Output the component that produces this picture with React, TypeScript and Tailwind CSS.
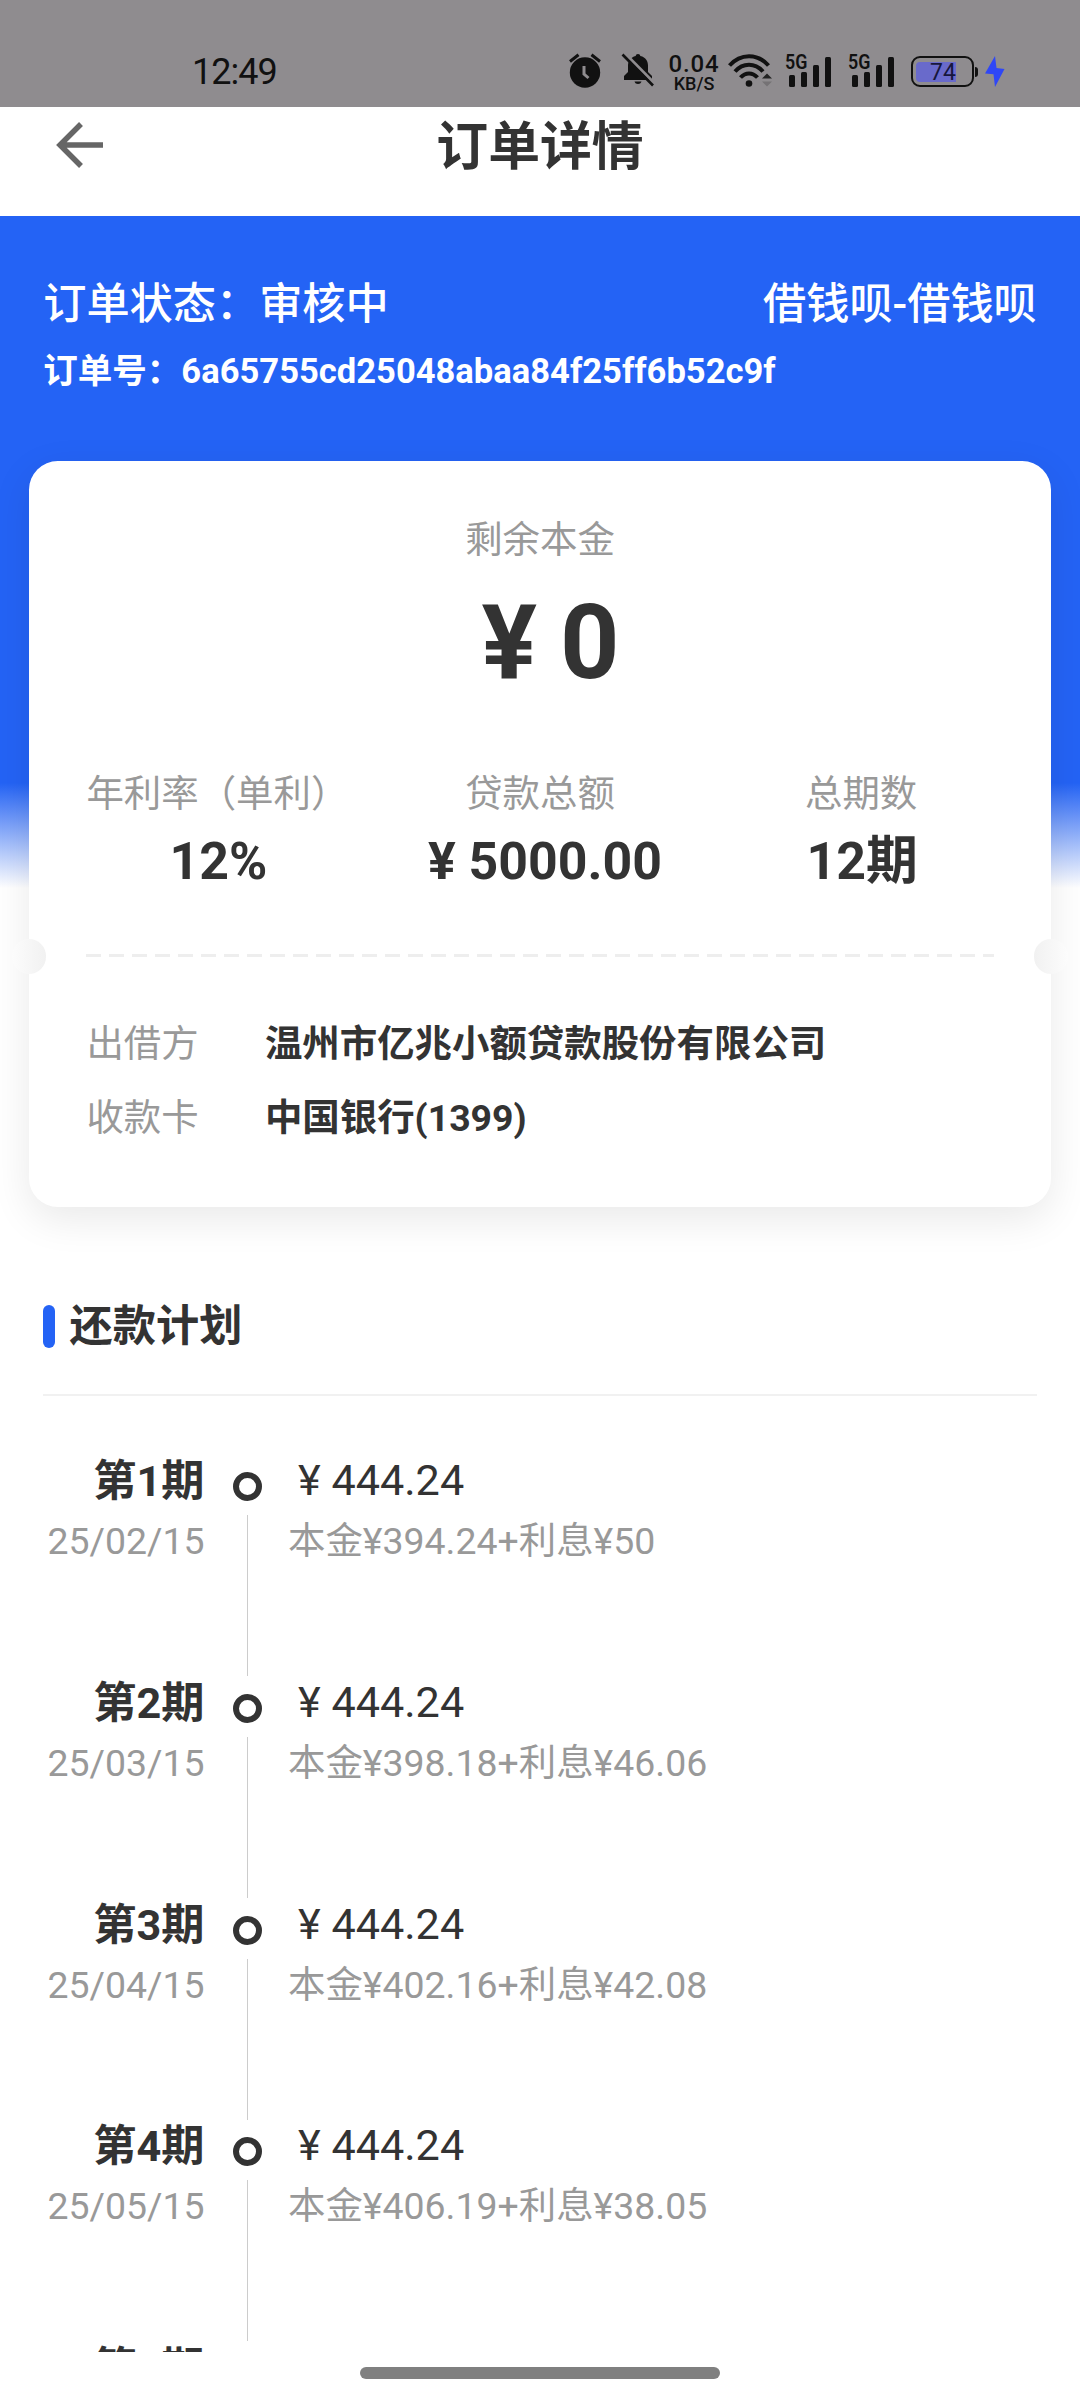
import type { ReactNode } from 'react';

interface Installment {
  term: number;
  date: string;
  amount: string;
  detail: string;
}

const installments: Installment[] = [
  { term: 1, date: '25/02/15', amount: '444.24', detail: '本金¥394.24+利息¥50' },
  { term: 2, date: '25/03/15', amount: '444.24', detail: '本金¥398.18+利息¥46.06' },
  { term: 3, date: '25/04/15', amount: '444.24', detail: '本金¥402.16+利息¥42.08' },
  { term: 4, date: '25/05/15', amount: '444.24', detail: '本金¥406.19+利息¥38.05' },
  { term: 5, date: '25/06/15', amount: '444.24', detail: '本金¥410.25+利息¥33.99' },
];

function AlarmIcon() {
  return (
    <svg width="32" height="35" viewBox="0 0 32 35" fill="none">
      <circle cx="16" cy="19.5" r="15.2" fill="#111" />
      <path d="M1 8.5 9.5 1.8M31 8.5 22.5 1.8" stroke="#111" strokeWidth="3" />
      <path d="M15 13v8l4.5 4" stroke="#8f8c8f" strokeWidth="3" />
    </svg>
  );
}

function MutedBellIcon() {
  return (
    <svg width="34" height="34" viewBox="0 0 34 34" fill="none">
      <path
        d="M17 1c1.400 0 2.200.8 2.300 2C25 4.200 27 8.500 27 12.500V19l4 4v4H3v-4l4-4v-6.500C7 8.500 9.500 4.200 14.700 3 14.800 1.800 15.600 1 17 1z"
        fill="#111"
      />
      <path d="M13.500 28.500h7c-.5 1.700-1.800 2.500-3.500 2.500s-3-.8-3.500-2.500z" fill="#111" />
      <path d="M4.500 1 34 31" stroke="#8f8c8f" strokeWidth="3" />
      <path d="M1.500 1.500 32 32.500" stroke="#111" strokeWidth="2.600" />
    </svg>
  );
}

function WifiIcon() {
  return (
    <svg width="44" height="35" viewBox="0 0 44 35" fill="none">
      <g stroke="#111" strokeWidth="4">
        <path d="M1.500 12.500c11-12.500 28-12.500 39 0" />
        <path d="M7 18.500c8-9 20-9 28 0" />
        <path d="M12.500 24.500c5-5.500 12-5.500 17 0" />
      </g>
      <circle cx="21" cy="30.500" r="3.300" fill="#111" />
      <path d="M34 25.500 39 20.500 44 25.500z" fill="#222" />
      <path d="M34 28.500 39 33.500 44 28.500z" fill="#757275" />
    </svg>
  );
}

function SignalIcon() {
  return (
    <div className="relative h-8 w-[47px]">
      <span className="absolute -top-[3px] left-0 origin-left scale-x-85 text-[21px] leading-5 font-semibold">5G</span>
      <svg className="absolute inset-0" width="47" height="32" viewBox="0 0 47 32" fill="#111">
        <rect x="4" y="20" width="6" height="12" rx="1.500" />
        <rect x="16" y="17" width="6" height="15" rx="1.500" />
        <rect x="28" y="10" width="6" height="22" rx="1.500" />
        <rect x="40" y="2" width="6" height="30" rx="1.500" />
      </svg>
    </div>
  );
}

function Battery() {
  return (
    <div className="flex items-center">
      <div className="flex h-[31px] w-[63px] items-center rounded-[9px] border-2 border-[#111] pl-[3px]">
        <div className="h-5 w-10 rounded-l-[4px] bg-[#696acb] pl-[14px] text-[23px] leading-[22px] text-[#16163c]">74</div>
      </div>
      <div className="ml-px h-2.5 w-[3px] rounded-r bg-[#111]" />
      <svg className="ml-[7px]" width="20" height="31" viewBox="0 0 20 31" fill="#2f47f6">
        <path d="M10 0 0 17.500l8.500.8L10 31l9.500-18-8-1z" />
      </svg>
    </div>
  );
}

function StatusBar() {
  return (
    <div className="flex h-[107px] items-start bg-[#8f8c8f] pt-[53px] text-[#111]">
      <span className="mt-px ml-[192px] w-[377px] text-[36px] leading-9 tracking-[-1px]">12:49</span>
      <AlarmIcon />
      <div className="ml-5">
        <MutedBellIcon />
      </div>
      <div className="ml-[12px] flex w-[54px] flex-col items-center font-medium">
        <span className="text-[24px] leading-[22px] tracking-[0.800px]">0.04</span>
        <span className="text-[18px] leading-[18px]">KB/S</span>
      </div>
      <div className="ml-[7px]">
        <WifiIcon />
      </div>
      <div className="mt-0.5 ml-[13px]">
        <SignalIcon />
      </div>
      <div className="mt-0.5 ml-4">
        <SignalIcon />
      </div>
      <div className="mt-[3px] ml-[16px]">
        <Battery />
      </div>
    </div>
  );
}

function TitleBar() {
  return (
    <header className="grid h-[109px] grid-cols-[200px_1fr_200px] bg-white">
      <svg className="mt-[15px] ml-[56px]" width="48" height="46" viewBox="0 0 48 46" fill="none">
        <path d="M25 2 4 23l21 21M4 23h43" stroke="#666" strokeWidth="5.500" />
      </svg>
      <h1 className="pt-[6px] text-center text-[51.84px] leading-[70px] font-bold">订单详情</h1>
    </header>
  );
}

function Stat({ label, children }: { label: string; children: ReactNode }) {
  return (
    <div className="flex flex-col items-center">
      <div className="text-[37.44px] leading-[52px] whitespace-nowrap text-[#999]">{label}</div>
      <div className="mt-3 pl-0.5 text-[51.84px] leading-[60px] font-bold whitespace-nowrap">{children}</div>
    </div>
  );
}

function InfoRow({ label, value }: { label: string; value: string }) {
  return (
    <div className="flex text-[37.44px] leading-[74px]">
      <span className="w-[178.500px] text-[#999]">{label}</span>
      <span className="font-bold">{value}</span>
    </div>
  );
}

function LoanCard() {
  return (
    <section className="relative mx-[28.8px] mt-[65px] h-[746px] rounded-[28.8px] bg-white px-[57.600px] pt-[53px] shadow-[0_12px_40px_rgba(0,0,0,0.09)]">
      <div className="text-center text-[37.44px] leading-[52px] text-[#999]">剩余本金</div>
      <div className="mt-[17px] pl-[21px] text-center text-[103.68px] leading-[120px] font-bold [word-spacing:-3px]">¥ 0</div>
      <div className="mt-[65px] grid grid-cols-[262px_1fr_262px]">
        <Stat label="年利率（单利）">12%</Stat>
        <Stat label="贷款总额">
          <span className="pl-2">¥ 5000.00</span>
        </Stat>
        <div className="mr-[3px]">
          <Stat label="总期数">12期</Stat>
        </div>
      </div>
      {/* Tear line */}
      <div className="mt-[61.500px] h-[3px] bg-[repeating-linear-gradient(90deg,#eee_0_15px,transparent_15px_23px)]" />
      <div className="mt-[50.500px]">
        <InfoRow label="出借方" value="温州市亿兆小额贷款股份有限公司" />
        <InfoRow label="收款卡" value="中国银行(1399)" />
      </div>
      {/* Ticket notches */}
      <div className="absolute top-[478px] -left-[17px] size-[34.56px] rounded-full bg-linear-to-r from-[#fcfcfc] to-[#f1f1f1]" />
      <div className="absolute top-[478px] -right-[17px] size-[34.56px] rounded-full bg-linear-to-l from-[#fcfcfc] to-[#f1f1f1]" />
    </section>
  );
}

function PlanRow({ item }: { item: Installment }) {
  return (
    <li className="flex h-[221.76px]">
      <div className="w-[204.500px] text-right">
        <div className="text-[43.2px] leading-[60px] font-bold">第{item.term}期</div>
        <div className="mt-[3px] text-[37.44px] leading-[52px] text-[#999]">{item.date}</div>
      </div>
      <div className="ml-[28.500px] flex w-[29px] flex-col items-center pt-5">
        <div className="size-[29px] shrink-0 rounded-full border-[6px] border-[#333]" />
        <div className="mt-3.5 h-[161px] w-px shrink-0 bg-[#ccc]" />
      </div>
      <div className="ml-[26px]">
        <div className="-mt-px pl-[10px] text-[43.2px] leading-[60px]">¥ {item.amount}</div>
        <div className="mt-1 text-[37.44px] leading-[52px] text-[#999]">{item.detail}</div>
      </div>
    </li>
  );
}

function RepaymentPlan() {
  return (
    <section className="mt-[90px]">
      <div className="mx-[43.2px] flex items-center">
        <div className="-mt-0.5 h-[43px] w-[12px] rounded-full bg-[#2463f5]" />
        <h2 className="ml-[14.400px] text-[43.2px] leading-[60px] font-bold">还款计划</h2>
      </div>
      <div className="mx-[43.2px] mt-[37px] h-0.5 bg-[#f1f1f1]" />
      <ul className="mt-[56px]">
        {installments.map((item) => (
          <PlanRow key={item.term} item={item} />
        ))}
      </ul>
    </section>
  );
}

export default function App() {
  return (
    <div className="flex h-[2400px] w-[1080px] flex-col overflow-hidden bg-white font-['Roboto','Noto_Sans_CJK_SC',sans-serif] text-[#333]">
      <StatusBar />
      <TitleBar />
      <main className="h-[2136px] shrink-0 overflow-hidden bg-[linear-gradient(180deg,#2463f5_0,#2463f5_567px,#fff_672px)] pt-[59px]">
        <div className="flex justify-between px-[43.2px] text-[43.2px] leading-[60px] font-medium text-white">
          <span>订单状态：审核中</span>
          <span>借钱呗-借钱呗</span>
        </div>
        <div className="mt-[11px] px-[43.2px] text-[34.56px] leading-[50px] font-bold text-white">
          订单号：6a65755cd25048abaa84f25ff6b52c9f
        </div>
        <LoanCard />
        <RepaymentPlan />
      </main>
      {/* Gesture bar */}
      <div className="mt-[15px] h-3 w-[360px] self-center rounded-full bg-[#808080]" />
    </div>
  );
}
